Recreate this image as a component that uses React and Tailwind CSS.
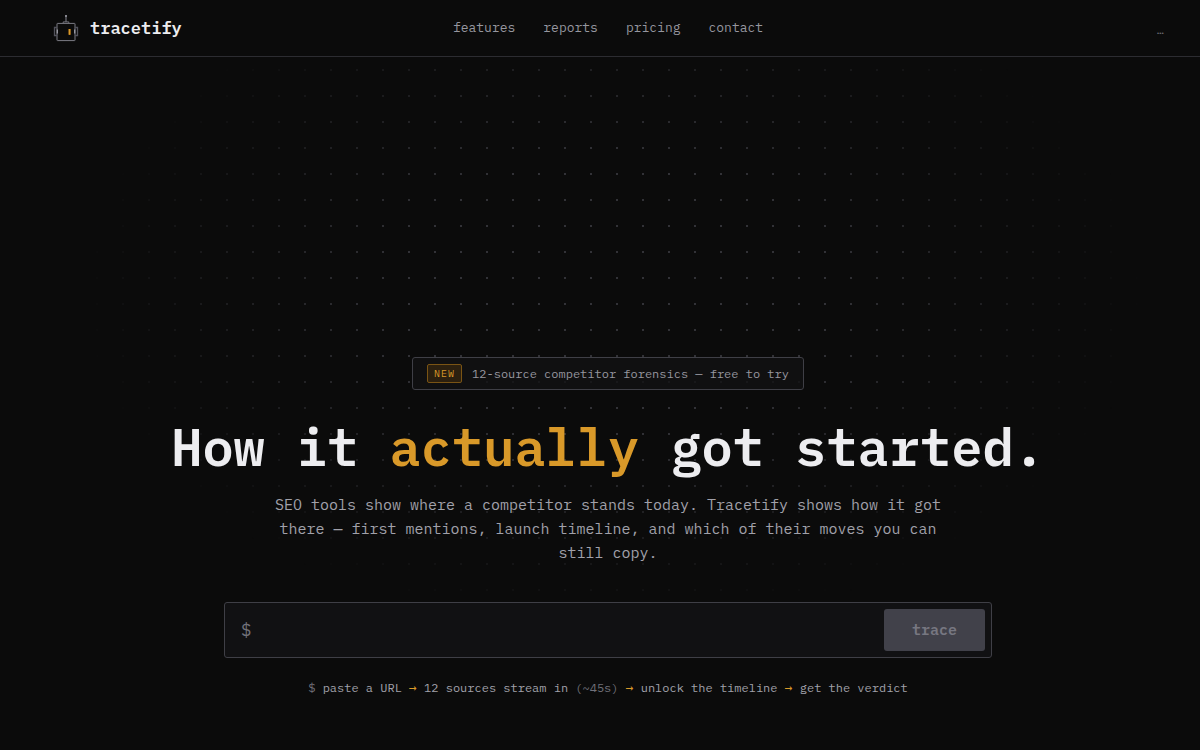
import React, { useState } from 'react';

const navLinks = ['features', 'reports', 'pricing', 'contact'];

const RobotLogo = () => (
    <svg width="28" height="28" viewBox="0 0 28 28" fill="none" aria-hidden="true">
        <path d="M14 3v5" stroke="#71717a" strokeWidth="1.2" />
        <rect x="13" y="1" width="2" height="2" fill="#85858d" />
        <path d="M11.2 9V7.9h5.6V9" stroke="#71717a" strokeWidth="1" />
        <rect x="5" y="9.4" width="18" height="17.2" rx="0.5" stroke="#7c7c85" strokeWidth="1" />
        <path d="M5 13.5H2.5v8H5M23 13.5h2.5v8H23" stroke="#52525b" strokeWidth="1.3" />
        <path d="M5.3 15.5v4M22.7 15.5v4" stroke="#a1a1aa" strokeWidth="1.2" />
        <rect x="16.2" y="15" width="2.8" height="5.8" fill="#8a5d17" />
        <rect x="17" y="15" width="1" height="5.8" fill="#d99929" />
    </svg>
);

const Header = () => (
    <header className="grid grid-cols-[1fr_auto_1fr] items-center h-[57px] pl-[52px] pr-9 border-b border-[#2c2c31]">
        <a href="#home" className="flex items-center gap-2.5 justify-self-start">
            <RobotLogo />
            <span className="text-[17px] leading-7 font-semibold text-[#ededf0]">tracetify</span>
        </a>
        <nav className="flex gap-7 text-[13px] text-[#96969f]">
            {navLinks.map((link) => (
                <a key={link} href={`#${link}`} className="hover:text-white">{link}</a>
            ))}
        </nav>
        <span className="justify-self-end pt-1 text-xs text-[#71717a]">…</span>
    </header>
);

const Arrow = () => <span className="font-['DejaVu_Sans_Mono',monospace] text-[13px] leading-none text-[#d99929]">→</span>;

const TraceForm = () => {
    const [url, setUrl] = useState('');

    return (
        <form
            onSubmit={(e) => e.preventDefault()}
            className="flex w-full max-w-3xl items-center rounded-[3px] border border-[#3f3f46] bg-[#111113] p-1.5"
        >
            <label htmlFor="url" className="pl-2.5 text-[17px] leading-7 text-[#71717a]">$</label>
            <input
                id="url"
                type="text"
                value={url}
                onChange={(e) => setUrl(e.target.value)}
                className="min-w-0 flex-1 bg-transparent px-3 text-[15px] text-[#ededf0] outline-none"
            />
            <button
                type="submit"
                disabled={!url}
                className="h-[42px] rounded-[3px] px-7 text-[15px] font-semibold bg-[#d99929] text-[#0b0b0b] disabled:bg-[#41414a] disabled:text-[#777781]"
            >
                trace
            </button>
        </form>
    );
};

const Hero = () => (
    <section className="relative flex flex-1 flex-col items-center pl-8 pr-4 pt-[300px] pb-[52px] text-center">
        <div className="pointer-events-none absolute inset-0 bg-[radial-gradient(circle,#323237_1px,transparent_1px)] bg-[length:26px_26px] bg-[position:6px_0px] [mask-image:radial-gradient(ellipse_61%_66%_at_51%_34%,black_30%,transparent_73%)]" />

        <div className="relative flex items-center gap-2.5 rounded-[3px] border border-[#3f3f46] bg-[#111113]/80 px-3.5 py-1.5">
            <span className="rounded-[2px] border border-[#7a5414] bg-[#2c200f] px-1.5 py-px text-[10px] leading-[15px] tracking-widest text-[#d99929]">NEW</span>
            <span className="text-xs text-[#96969f]">12-source competitor forensics — free to try</span>
        </div>

        <h1 className="relative mt-7 text-[52px] leading-[57px] font-semibold text-[#ededf0]">
            How it <span className="text-[#d99929]">actually</span> got started.
        </h1>

        <p className="relative mt-[18px] max-w-[680px] text-[15px] leading-6 text-[#a1a1aa]">
            SEO tools show where a competitor stands today. Tracetify shows how it got there — first mentions, launch timeline, and which of their moves you can still copy.
        </p>

        <div className="relative mt-[37px] flex w-full justify-center">
            <TraceForm />
        </div>

        <p className="relative mt-5 text-xs leading-5 text-[#a1a1aa]">
            <span className="text-[#71717a]">$</span> paste a URL <Arrow /> 12 sources stream in <span className="text-[#71717a]">(~45s)</span> <Arrow /> unlock the timeline <Arrow /> get the verdict
        </p>
    </section>
);

const App = () => (
    <div className="flex min-h-screen flex-col bg-[#0b0b0b] font-['IBM_Plex_Mono','Liberation_Mono',monospace]">
        <Header />
        <Hero />
    </div>
);

export default App;
